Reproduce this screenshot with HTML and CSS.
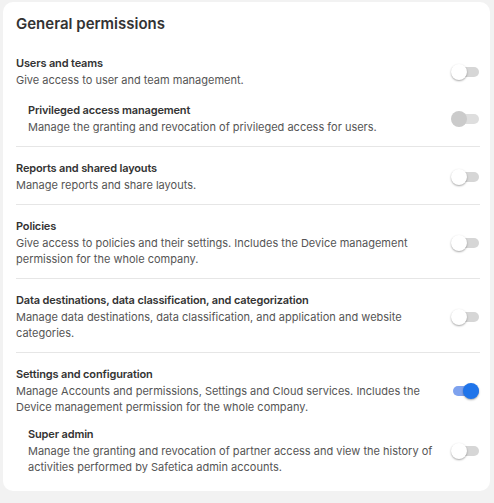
FILE: index.html
```html
<!DOCTYPE html>
<html lang="en">
<head>
<meta charset="utf-8">
<title>General permissions</title>
<link rel="stylesheet" href="styles.css">
</head>
<body>
<div class="card">
  <h2 class="title">General permissions</h2>

  <div class="section first">
    <div class="row">
      <div class="text">
        <div class="label">Users and teams</div>
        <div class="desc">Give access to user and team management.</div>
      </div>
      <span class="switch"><span class="track"></span><span class="knob"></span></span>
    </div>
    <div class="row nested">
      <div class="text">
        <div class="label">Privileged access management</div>
        <div class="desc">Manage the granting and revocation of privileged access for users.</div>
      </div>
      <span class="switch disabled"><span class="track"></span><span class="knob"></span></span>
    </div>
  </div>

  <div class="section">
    <div class="row">
      <div class="text">
        <div class="label">Reports and shared layouts</div>
        <div class="desc">Manage reports and share layouts.</div>
      </div>
      <span class="switch"><span class="track"></span><span class="knob"></span></span>
    </div>
  </div>

  <div class="section">
    <div class="row">
      <div class="text">
        <div class="label">Policies</div>
        <div class="desc">Give access to policies and their settings. Includes the Device management permission for the whole company.</div>
      </div>
      <span class="switch"><span class="track"></span><span class="knob"></span></span>
    </div>
  </div>

  <div class="section">
    <div class="row">
      <div class="text">
        <div class="label">Data destinations, data classification, and categorization</div>
        <div class="desc">Manage data destinations, data classification, and application and website categories.</div>
      </div>
      <span class="switch"><span class="track"></span><span class="knob"></span></span>
    </div>
  </div>

  <div class="section last">
    <div class="row">
      <div class="text">
        <div class="label">Settings and configuration</div>
        <div class="desc">Manage Accounts and permissions, Settings and Cloud services. Includes the Device management permission for the whole company.</div>
      </div>
      <span class="switch on"><span class="track"></span><span class="knob"></span></span>
    </div>
    <div class="row nested">
      <div class="text">
        <div class="label">Super admin</div>
        <div class="desc">Manage the granting and revocation of partner access and view the history of activities performed by Safetica admin accounts.</div>
      </div>
      <span class="switch"><span class="track"></span><span class="knob"></span></span>
    </div>
  </div>
</div>
</body>
</html>
```
FILE: styles.css
```css
html, body {
  margin: 0;
  padding: 0;
  background: #f2f2f2;
}
body {
  font-family: Inter, "Noto Sans", sans-serif;
  color: #333;
}
.card {
  box-sizing: border-box;
  width: 487px;
  margin: 2px 0 0 3px;
  background: #fff;
  border-radius: 10px;
  padding: 11px 10px 16px 13px;
}
.title {
  margin: 0 0 20px;
  font-size: 15px;
  line-height: 22px;
  font-weight: 600;
  color: #333;
}
.section {
  border-top: 1px solid #e6e6e6;
  padding: 13px 1px 11px 0;
  display: flex;
  flex-direction: column;
  gap: 13px;
}
.section.first {
  border-top: none;
  padding-top: 0;
  gap: 14px;
}
.section.last {
  padding-bottom: 0;
  gap: 11px;
}
.row {
  display: flex;
  align-items: center;
}
.row.nested {
  padding-left: 12px;
}
.text {
  flex: 1;
  min-width: 0;
}
.label {
  font-size: 11px;
  line-height: 16px;
  font-weight: 600;
  letter-spacing: -0.15px;
  color: #333;
  margin-bottom: 1px;
}
.desc {
  font-size: 11px;
  line-height: 16px;
  color: #555;
}
.switch {
  position: relative;
  flex: none;
  width: 28px;
  height: 16px;
  margin-left: 12px;
}
.track {
  position: absolute;
  left: 2px;
  right: 0;
  top: 3px;
  height: 10px;
  border-radius: 5px;
  background: #d6d6d6;
}
.knob {
  position: absolute;
  left: 0;
  top: 0;
  width: 16px;
  height: 16px;
  border-radius: 50%;
  background: #fff;
  box-shadow: 0 1px 2px rgba(0, 0, 0, 0.35);
}
.switch.disabled .track {
  background: #dedede;
}
.switch.disabled .knob {
  background: #cbcbcb;
  box-shadow: none;
}
.switch.on .track {
  background: #7ea2ee;
}
.switch.on .knob {
  left: 12px;
  background: #1f74ea;
}
```
